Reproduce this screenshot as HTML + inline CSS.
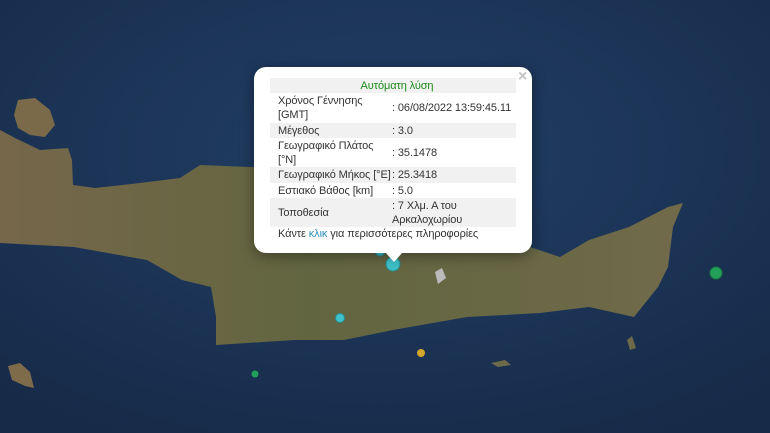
<!DOCTYPE html>
<html><head><meta charset="utf-8"><style>
body{margin:0;width:770px;height:433px;overflow:hidden;background:#1b3254;font-family:"Liberation Sans",sans-serif}
svg{position:absolute;left:0;top:0}
.pop{position:absolute;left:254px;top:67px;width:278px;height:186px;background:#fff;border-radius:12px;box-shadow:0 3px 14px rgba(0,0,0,.4)}
.tip{position:absolute;left:385px;top:252px;width:0;height:0;border-left:9px solid transparent;border-right:9px solid transparent;border-top:10px solid #fff}
.x{position:absolute;left:518px;top:68px;color:#c3c3c3;font-size:16px;font-weight:bold}
table{position:absolute;left:270px;top:78px;width:246px;border-collapse:collapse;font-size:11px;color:#333;letter-spacing:-0.1px;table-layout:fixed}
td{padding:0 0 0 8px;line-height:14px;vertical-align:middle;white-space:nowrap}
tr.g{background:#f1f1f1}
td.v{padding-left:0}
.hd{text-align:center;color:#1a8c1a;height:15px}
.lk{position:absolute;left:278px;top:228px;font-size:11px;color:#333;letter-spacing:-0.1px}
.lk span{color:#2a8fbd}
</style></head><body>
<svg width="770" height="433">
<defs><radialGradient id="s" cx="50%" cy="35%" r="75%"><stop offset="0" stop-color="#213f66"/><stop offset="1" stop-color="#172a48"/></radialGradient>
<linearGradient id="l" x1="0" y1="0" x2="1" y2="0"><stop offset="0" stop-color="#76674a"/><stop offset=".45" stop-color="#626640"/><stop offset=".8" stop-color="#6a6846"/><stop offset="1" stop-color="#716a4a"/></linearGradient></defs>
<rect width="770" height="433" fill="url(#s)"/>
<path d="M0,130 L15,138 L40,150 L68,148 L72,160 L73,185 L95,188 L140,183 L180,178 L200,165 L250,167 L300,168 L400,170 L500,200 L530,247 L560,257 L589,240 L629,227 L668,207 L683,203 L673,227 L668,267 L658,287 L634,317 L589,307 L540,313 L467,317 L393,330 L344,340 L295,340 L216,345 L216,317 L211,287 L182,280 L147,260 L74,247 L0,243 Z" fill="url(#l)"/>
<path d="M18,100 L35,98 L50,110 L55,125 L45,137 L30,135 L18,128 L14,115 Z" fill="#7a6a4a"/>
<path d="M8,366 L20,363 L30,372 L34,388 L25,386 L12,380 Z" fill="#7d6b4a"/>
<path d="M491,363 L505,360 L511,365 L498,367 Z" fill="#6d6a4a"/>
<path d="M627,340 L632,336 L636,348 L630,350 Z" fill="#6d6a4a"/>
<path d="M435,272 L442,268 L446,278 L438,284 Z" fill="#bbb"/>
<circle cx="380" cy="251" r="5" fill="#3fc1c9" stroke="#2a8c95"/>
<circle cx="393" cy="264" r="7" fill="#3fc1c9" stroke="#2a8c95"/>
<circle cx="340" cy="318" r="4.5" fill="#3fc1c9" stroke="#2a8c95"/>
<circle cx="421" cy="353" r="4" fill="#d4a52a"/>
<circle cx="255" cy="374" r="3.5" fill="#22a05a"/>
<circle cx="716" cy="273" r="6" fill="#22a05a" stroke="#187a44"/>
</svg>
<div class="pop"></div><div class="tip"></div><div class="x">×</div>
<table>
<colgroup><col style="width:122px"><col></colgroup>
<tr class="g"><td colspan="2" class="hd">Αυτόματη λύση</td></tr>
<tr style="height:30px"><td>Χρόνος Γέννησης<br>[GMT]</td><td class="v">: 06/08/2022 13:59:45.11</td></tr>
<tr class="g" style="height:15px"><td>Μέγεθος</td><td class="v">: 3.0</td></tr>
<tr style="height:29px"><td>Γεωγραφικό Πλάτος<br>[°N]</td><td class="v">: 35.1478</td></tr>
<tr class="g" style="height:16px"><td>Γεωγραφικό Μήκος [°E]</td><td class="v">: 25.3418</td></tr>
<tr style="height:15px"><td>Εστιακό Βάθος [km]</td><td class="v">: 5.0</td></tr>
<tr class="g" style="height:29px"><td>Τοποθεσία</td><td class="v">: 7 Χλμ. Α του<br>Αρκαλοχωρίου</td></tr>
</table>
<div class="lk">Κάντε <span>κλικ</span> για περισσότερες πληροφορίες</div>
</body></html>
